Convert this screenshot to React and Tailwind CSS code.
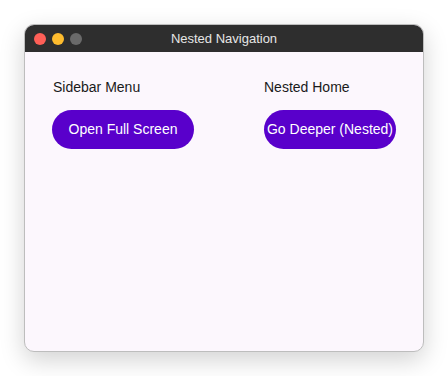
export default function App() {
  return (
    <div className="w-[448px] h-[376px] bg-white pt-6 pl-6" style={{ fontFamily: '"Liberation Sans", Arial, sans-serif' }}>
      <div className="w-[400px] h-[328px] rounded-[10px] overflow-hidden border border-[#bdbdbd] shadow-[0_8px_24px_rgba(0,0,0,0.18)] bg-[#fcf7fd] flex flex-col">
        <div className="h-[27px] bg-[#2e2e2e] flex items-center relative shrink-0">
          <div className="flex gap-[6px] pl-[9px]">
            <span className="w-3 h-3 rounded-full bg-[#fe5f57]"></span>
            <span className="w-3 h-3 rounded-full bg-[#febc2e]"></span>
            <span className="w-3 h-3 rounded-full bg-[#6a6a6a]"></span>
          </div>
          <div className="absolute inset-0 flex items-center justify-center text-[13px] text-[#e6e6e6]">Nested Navigation</div>
        </div>
        <div className="flex justify-between pl-[27px] pr-[27px] pt-[27px]">
          <div className="flex flex-col gap-[14px]">
            <div className="text-[14px] text-[#1a1a1a] h-[17px] leading-[17px] pl-px">Sidebar Menu</div>
            <button className="h-[39px] w-[142px] rounded-full bg-[#5900cb] text-white text-[14px] flex items-center justify-center">Open Full Screen</button>
          </div>
          <div className="flex flex-col gap-[14px] w-[132px]">
            <div className="text-[14px] text-[#1a1a1a] h-[17px] leading-[17px]">Nested Home</div>
            <button className="h-[39px] w-[132px] rounded-full bg-[#5900cb] text-white text-[14px] whitespace-nowrap flex items-center justify-center">Go Deeper (Nested)</button>
          </div>
        </div>
      </div>
    </div>
  )
}
